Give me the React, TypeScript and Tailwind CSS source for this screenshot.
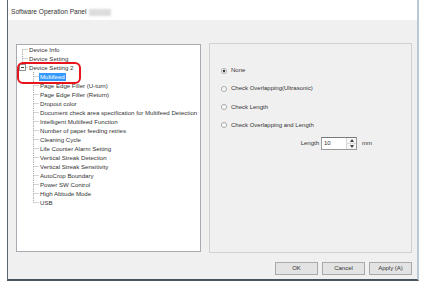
import React from "react";

const font = { fontFamily: '"Liberation Sans", Arial, sans-serif' };

const children = [
  "Multifeed",
  "Page Edge Filler (U-turn)",
  "Page Edge Filler (Return)",
  "Dropout color",
  "Document check area specification for Multifeed Detection",
  "Intelligent Multifeed Function",
  "Number of paper feeding retries",
  "Cleaning Cycle",
  "Life Counter Alarm Setting",
  "Vertical Streak Detection",
  "Vertical Streak Sensitivity",
  "AutoCrop Boundary",
  "Power SW Control",
  "High Altitude Mode",
  "USB",
];

const radios = [
  { label: "None", checked: true },
  { label: "Check Overlapping(Ultrasonic)", checked: false },
  { label: "Check Length", checked: false },
  { label: "Check Overlapping and Length", checked: false },
];

// dotted connector for one tree row
function Connector({ x, width, top, bottom, box }: { x: number; width: number; top: boolean; bottom: boolean; box?: boolean }) {
  const dots = { stroke: "#a8a8a8", strokeWidth: 1, strokeDasharray: "1 1" };
  return (
    <svg width={width} height={9} className="shrink-0">
      {top && <line x1={x} y1={0} x2={x} y2={4.5} {...dots} />}
      {bottom && <line x1={x} y1={4.5} x2={x} y2={9} {...dots} />}
      <line x1={box ? x + 3 : x} y1={4.5} x2={width} y2={4.5} {...dots} />
      {box && (
        <>
          <rect x={x - 3} y={1.5} width={6} height={6} fill="#fff" stroke="#919191" strokeWidth={1} />
          <line x1={x - 1.5} y1={4.5} x2={x + 1.5} y2={4.5} stroke="#444" strokeWidth={1} />
        </>
      )}
    </svg>
  );
}

function TreeRow({ label, depth, first, last, box, selected }: { label: string; depth: number; first?: boolean; last?: boolean; box?: boolean; selected?: boolean }) {
  return (
    <div className="flex h-[9px] items-center">
      {depth === 0 ? (
        <Connector x={5.5} width={11} top={!first} bottom={!last} box={box} />
      ) : (
        <Connector x={16.5} width={22} top bottom={!last} />
      )}
      <span
        className={
          "whitespace-nowrap px-[1px] text-[6.1px] leading-[8px] " +
          (selected ? "bg-[#3399ff] text-white" : "text-[#333]")
        }
      >
        {label}
      </span>
    </div>
  );
}

function Radio({ checked }: { checked: boolean }) {
  return (
    <svg width={6} height={6} className="shrink-0">
      <circle cx={3} cy={3} r={2.6} fill="#f6f6f6" stroke="#a0a0a0" strokeWidth={0.8} />
      {checked && <circle cx={3} cy={3} r={1.2} fill="#333" />}
    </svg>
  );
}

function Button({ label }: { label: string }) {
  return (
    <div className="flex h-[13px] w-[43px] items-center justify-center border border-[#a9a9a9] bg-[#e3e3e3] text-[6px] text-[#333]">
      {label}
    </div>
  );
}

export default function App() {
  return (
    <div className="h-[284px] w-[424px] overflow-hidden bg-white" style={font}>
      <div className="ml-[7px] flex h-[281px] w-[412px] flex-col border-b-2 border-l border-r-2 border-b-[#4a525c] border-l-[#5b6670] border-r-[#b9c8d6]">
        {/* Title bar */}
        <div className="flex h-[20px] items-center gap-[2px] bg-white pl-[3px] pt-[4px]">
          <span className="text-[6.6px] text-[#333]">Software Operation Panel</span>
          <span className="h-[7px] w-[22px] bg-[#dcdcdc] blur-[1px]" />
        </div>

        {/* Body */}
        <div className="flex flex-1 flex-col bg-[#f0f0f0]">
          <div className="flex items-start pl-[8px] pt-[23px]">
            {/* Tree */}
            <div className="relative mt-[1px] h-[208px] w-[185px] border border-[#a8abb1] bg-white">
              <TreeRow label="Device Info" depth={0} first />
              <TreeRow label="Device Setting" depth={0} />
              <TreeRow label="Device Setting 2" depth={0} last box />
              {children.map((c, i) => (
                <TreeRow key={c} label={c} depth={1} selected={i === 0} last={i === children.length - 1} />
              ))}
              <div className="absolute left-[0px] top-[17px] h-[22px] w-[64px] rounded-[6px] border-2 border-[#e8141b]" />
            </div>

            {/* Multifeed settings */}
            <div className="ml-[8px] h-[210px] w-[203px] border border-[#d2d2d2] bg-[#f0f0f0]">
              <div className="flex flex-col gap-[9.3px] pl-[11px] pt-[22px]">
                {radios.map((r) => (
                  <div key={r.label} className="flex h-[9px] items-center gap-[4px]">
                    <Radio checked={r.checked} />
                    <span className="text-[6px] text-[#333]">{r.label}</span>
                  </div>
                ))}
              </div>
              <div className="mt-[7px] flex items-center">
                <span className="w-[111px] pr-[2px] text-right text-[6px] text-[#333]">Length</span>
                <div className="flex h-[13px] w-[36px] border border-[#9a9a9a] border-t-[#7a7a7a] bg-white">
                  <span className="flex-1 pl-[2px] text-[6px] leading-[11px] text-[#333]">10</span>
                  <div className="flex w-[10px] flex-col border-l border-[#dadada]">
                    <div className="flex flex-1 items-center justify-center border-b border-[#dadada] bg-[#f6f6f6]">
                      <svg width={4} height={3}><polygon points="0,3 2,0 4,3" fill="#444" /></svg>
                    </div>
                    <div className="flex flex-1 items-center justify-center bg-[#f6f6f6]">
                      <svg width={4} height={3}><polygon points="0,0 4,0 2,3" fill="#444" /></svg>
                    </div>
                  </div>
                </div>
                <span className="ml-[5px] text-[6px] text-[#333]">mm</span>
              </div>
            </div>
          </div>

          {/* Buttons */}
          <div className="mt-[9px] flex justify-end gap-[4px] pr-[5px]">
            <Button label="OK" />
            <Button label="Cancel" />
            <Button label="Apply (A)" />
          </div>
        </div>
      </div>
    </div>
  );
}
